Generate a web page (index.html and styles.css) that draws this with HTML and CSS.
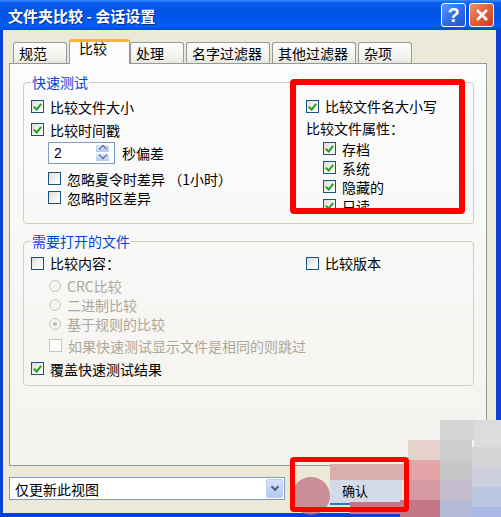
FILE: index.html
```html
<!DOCTYPE html>
<html lang="zh-CN">
<head>
    <meta charset="UTF-8">
    <title>文件夹比较 - 会话设置</title>
    <link rel="stylesheet" href="styles.css">
</head>
<body>
<div class="window">
    <div class="titlebar">
        <div class="title">文件夹比较 - 会话设置</div>
        <div class="title-btn help">?</div>
        <div class="title-btn close">
            <svg width="14" height="14" viewBox="0 0 14 14"><path d="M2 2L12 12M12 2L2 12" stroke="#fff" stroke-width="2.6"/></svg>
        </div>
    </div>
    <div class="client">
        <div class="tabs">
            <div class="tab">规范</div>
            <div class="tab active">比较</div>
            <div class="tab">处理</div>
            <div class="tab">名字过滤器</div>
            <div class="tab">其他过滤器</div>
            <div class="tab">杂项</div>
        </div>
        <div class="panel">
            <fieldset class="group group-quick">
                <legend>快速测试</legend>
                <div class="quick-grid">
                    <div class="col">
                        <div class="opt"><span class="cb on"></span>比较文件大小</div>
                        <div class="opt"><span class="cb on"></span>比较时间戳</div>
                        <div class="opt indent">
                            <div class="spin">
                                <span class="spin-val">2</span>
                                <span class="spin-btns"><span class="arrow up"></span><span class="arrow down"></span></span>
                            </div>
                            <span class="spin-label">秒偏差</span>
                        </div>
                        <div class="opt small indent first-small"><span class="cb"></span>忽略夏令时差异 （1小时）</div>
                        <div class="opt small indent"><span class="cb"></span>忽略时区差异</div>
                    </div>
                    <div class="col">
                        <div class="opt top"><span class="cb on"></span>比较文件名大小写</div>
                        <div class="opt label">比较文件属性：</div>
                        <div class="attrs">
                            <div class="opt attr"><span class="cb on"></span>存档</div>
                            <div class="opt attr"><span class="cb on"></span>系统</div>
                            <div class="opt attr"><span class="cb on"></span>隐藏的</div>
                            <div class="opt attr"><span class="cb on"></span>只读</div>
                        </div>
                    </div>
                </div>
            </fieldset>
            <fieldset class="group group-open">
                <legend>需要打开的文件</legend>
                <div class="open-top">
                    <div class="opt"><span class="cb"></span>比较内容：</div>
                    <div class="opt"><span class="cb"></span>比较版本</div>
                </div>
                <div class="radios">
                    <div class="opt radio-row disabled"><span class="radio"></span>CRC比较</div>
                    <div class="opt radio-row disabled"><span class="radio"></span>二进制比较</div>
                    <div class="opt radio-row disabled"><span class="radio sel"></span>基于规则的比较</div>
                </div>
                <div class="opt indent disabled skip"><span class="cb off"></span>如果快速测试显示文件是相同的则跳过</div>
                <div class="opt cover"><span class="cb on"></span>覆盖快速测试结果</div>
            </fieldset>
        </div>
        <div class="bottom">
            <div class="combo">
                <span class="combo-text">仅更新此视图</span>
                <span class="combo-btn"><span class="chev"></span></span>
            </div>
            <div class="ok-btn">确认</div>
        </div>
    </div>

    <!-- annotation marks and blur over the screenshot -->
    <div class="mark mark-attrs"></div>
    <div class="mosaic">
        <span class="px" style="left:150px;top:0;width:34px;height:20px;background:#d6d6d6"></span>
        <span class="px" style="left:184px;top:0;width:30px;height:27px;background:#dcdcdc"></span>
        <span class="px" style="left:118px;top:20px;width:32px;height:20px;background:#e6d2cc"></span>
        <span class="px" style="left:150px;top:20px;width:32px;height:20px;background:#cdcdcd"></span>
        <span class="px" style="left:182px;top:27px;width:32px;height:20px;background:#d6d6d8"></span>
        <span class="px" style="left:118px;top:40px;width:32px;height:20px;background:#e4a4a8"></span>
        <span class="px" style="left:150px;top:40px;width:32px;height:20px;background:#c8c6c8"></span>
        <span class="px" style="left:182px;top:47px;width:32px;height:20px;background:#cdd0dc"></span>
        <span class="px" style="left:118px;top:60px;width:32px;height:20px;background:#d89aa2"></span>
        <span class="px" style="left:150px;top:60px;width:32px;height:20px;background:#c4bccc"></span>
        <span class="px" style="left:182px;top:67px;width:32px;height:20px;background:#bcc6e2"></span>
        <span class="px" style="left:110px;top:80px;width:40px;height:20px;background:#c27886"></span>
        <span class="px" style="left:150px;top:80px;width:32px;height:20px;background:#b2bad8"></span>
        <span class="px" style="left:182px;top:87px;width:32px;height:13px;background:#aab8e6"></span>
        <span class="px" style="left:40px;top:44px;width:78px;height:16px;background:#d8aeae"></span>
        <span class="px" style="left:60px;top:82px;width:50px;height:12px;background:#c87482"></span>
        <span class="px blob" style="left:2px;top:57px;width:38px;height:38px"></span>
    </div>
    <div class="mark mark-ok"></div>
</div>
</body>
</html>
```

FILE: styles.css
```css
* {
    box-sizing: border-box;
    margin: 0;
    padding: 0;
}

body {
    width: 501px;
    height: 517px;
    overflow: hidden;
    font-family: "Noto Sans CJK SC", "Liberation Sans", sans-serif;
    font-size: 14px;
    color: #000;
}

.window {
    position: relative;
    height: 517px;
    display: flex;
    flex-direction: column;
    background: #0b3fd6;
    overflow: hidden;
}

.titlebar {
    height: 30px;
    display: flex;
    align-items: center;
    padding: 0 7px 0 8px;
    background: linear-gradient(#3a8cff 0, #0a5ef0 3px, #0055e6 10px, #0057eb 20px, #075ef2 26px, #0049d9 30px);
    color: #fff;
}

.title {
    flex: 1;
    font-size: 15px;
    font-weight: bold;
    white-space: pre;
    text-shadow: 1px 1px #0a2a8a;
}

.title-btn {
    width: 25px;
    height: 24px;
    border: 1px solid #fff;
    border-radius: 3px;
    display: flex;
    align-items: center;
    justify-content: center;
    margin-left: 3px;
}

.title-btn.help {
    background: linear-gradient(135deg, #5e97f8, #2a66e6 60%, #1c55d6);
    font-family: "Liberation Sans", sans-serif;
    font-weight: bold;
    font-size: 20px;
    line-height: 22px;
}

.title-btn.close {
    background: linear-gradient(135deg, #f0906a, #e15a30 55%, #c9401c);
}

.client {
    flex: 1;
    margin: 0 5px 4px 3px;
    background: #ece9d8;
    display: flex;
    flex-direction: column;
    padding: 9px 9px 0 6px;
}

/* tabs */
.tabs {
    display: flex;
    align-items: flex-end;
    height: 25px;
    padding-left: 4px;
    position: relative;
    z-index: 2;
}

.tab {
    height: 21px;
    min-width: 54px;
    margin: 0 2px 1px 0;
    padding: 0 7px 0 5px;
    border: 1px solid #919b9c;
    border-bottom: none;
    border-radius: 3px 3px 0 0;
    background: linear-gradient(#fefefe, #f3f2ed 70%, #e8e6dd);
    line-height: 20px;
    white-space: nowrap;
}

.tab.active {
    height: 25px;
    min-width: 61px;
    margin: 0;
    padding-left: 9px;
    border-top: 3px solid #f9b233;
    background: #fcfcfe;
    line-height: 13px;
}

.panel {
    height: 403px;
    margin-top: -1px;
    border: 1px solid #919b9c;
    background: linear-gradient(#fcfcfe, #f4f3ee);
    display: flex;
    flex-direction: column;
}

/* group boxes */
.group {
    margin: 10px 12px 0 13px;
    padding: 5px 0 8px 7px;
    border: 1px solid #d0d0bf;
    border-radius: 4px;
}

.group legend {
    padding: 0 1px;
    color: #0046d5;
    line-height: 16px;
}

.group-open {
    margin-top: 9px;
    padding: 3px 0 6px 7px;
}

.quick-grid {
    display: grid;
    grid-template-columns: 275px 1fr;
}

.opt {
    display: flex;
    align-items: center;
    height: 23px;
    line-height: 16px;
    white-space: nowrap;
}

.opt.indent {
    padding-left: 17px;
}

.opt.small {
    height: 19px;
}

.opt.first-small {
    margin-top: 5px;
}

.opt.top {
    height: 22px;
}

.opt.label {
    height: 22px;
}

.attrs {
    padding-left: 17px;
}

.opt.attr {
    height: 19px;
}

/* checkbox */
.cb {
    position: relative;
    flex: none;
    width: 13px;
    height: 13px;
    margin-right: 6px;
    border: 1px solid #1c5180;
    background: linear-gradient(135deg, #dcdcd6, #f6f6f3 60%, #fff);
}

.cb.on::after {
    content: "";
    position: absolute;
    left: 3px;
    top: 1px;
    width: 3px;
    height: 6px;
    border-right: 2px solid #21a121;
    border-bottom: 2px solid #21a121;
    transform: rotate(40deg);
}

.disabled {
    color: #aca899;
}

.cb.off {
    border-color: #cac8bb;
    background: #fff;
}

/* spin box */
.spin {
    width: 67px;
    height: 22px;
    border: 1px solid #7f9db9;
    background: #fff;
    display: flex;
    align-items: center;
    padding: 1px;
}

.spin-val {
    flex: 1;
    padding-left: 4px;
    font-family: "Liberation Sans", sans-serif;
    font-size: 14px;
}

.spin-btns {
    width: 15px;
    height: 18px;
    display: flex;
    flex-direction: column;
    margin-right: 3px;
}

.arrow {
    flex: 1;
    display: flex;
    align-items: center;
    justify-content: center;
    background: linear-gradient(#d5e2fc, #b6cbf6);
    border: 1px solid #fff;
}

.arrow::after {
    content: "";
    width: 5px;
    height: 5px;
    border-left: 1.5px solid #4d6185;
    border-top: 1.5px solid #4d6185;
}

.arrow.up::after {
    transform: translateY(1px) rotate(45deg);
}

.arrow.down::after {
    transform: translateY(-2px) rotate(225deg);
}

.spin-label {
    margin-left: 7px;
}

/* second group */
.open-top {
    display: grid;
    grid-template-columns: 275px 1fr;
}

.open-top .opt {
    height: 22px;
}

.radios {
    margin-top: 2px;
}

.opt.radio-row {
    height: 19px;
    padding-left: 18px;
}

.radio {
    position: relative;
    flex: none;
    width: 12px;
    height: 12px;
    margin-right: 6px;
    border: 1px solid #cac8bb;
    border-radius: 50%;
    background: #f4f3ee;
}

.radio.sel::after {
    content: "";
    position: absolute;
    left: 3px;
    top: 3px;
    width: 4px;
    height: 4px;
    border-radius: 50%;
    background: #c0bdb0;
}

.opt.skip {
    margin-top: 3px;
    height: 19px;
    padding-left: 18px;
}

.opt.cover {
    margin-top: 3px;
    height: 21px;
}

/* bottom row */
.bottom {
    display: flex;
    align-items: flex-start;
    margin-top: 11px;
}

.combo {
    width: 276px;
    height: 23px;
    border: 1px solid #7f9db9;
    background: #fff;
    display: flex;
    align-items: center;
    padding: 1px;
}

.combo-text {
    flex: 1;
    padding-left: 4px;
}

.combo-btn {
    width: 17px;
    height: 19px;
    border-radius: 2px;
    background: linear-gradient(#d7e3fd, #b3c8f5);
    border: 1px solid #bccdf5;
    display: flex;
    align-items: center;
    justify-content: center;
}

.chev {
    width: 6px;
    height: 6px;
    border-right: 2px solid #4d6185;
    border-bottom: 2px solid #4d6185;
    transform: translateY(-2px) rotate(45deg);
}

.ok-btn {
    width: 72px;
    height: 27px;
    margin: 1px 0 0 45px;
    border-top: 2px solid #3c6cd8;
    border-bottom: 2px solid #3c6cd8;
    background: #d3dbe8;
    line-height: 22px;
    padding-left: 12px;
    font-size: 13px;
}

/* overlays */
.mark {
    position: absolute;
    border: 6px solid #f00;
    border-radius: 4px;
}

.mark-attrs {
    left: 290px;
    top: 79px;
    width: 175px;
    height: 135px;
}

.mark-ok {
    left: 290px;
    top: 457px;
    width: 119px;
    height: 55px;
    border-width: 5px;
}

.mosaic {
    position: absolute;
    left: 290px;
    top: 420px;
    width: 211px;
    height: 97px;
}

.px {
    position: absolute;
}

.px.blob {
    border-radius: 50%;
    background: rgba(192, 110, 128, 0.75);
}
```
